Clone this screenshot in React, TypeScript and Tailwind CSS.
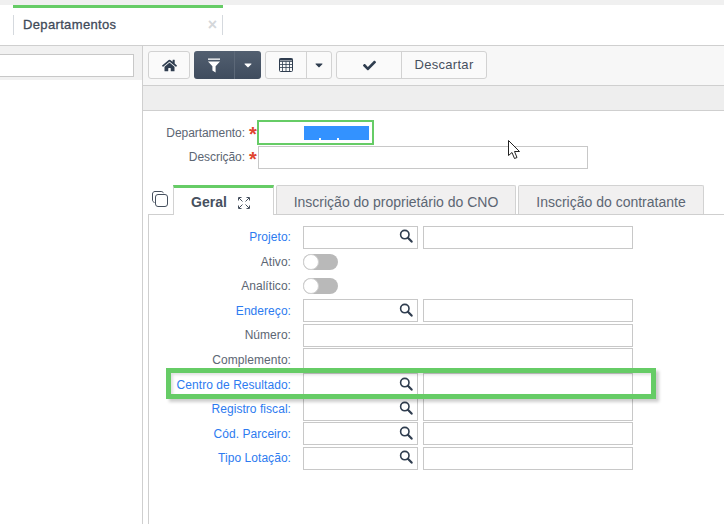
import { FaHome, FaCheck, FaCaretDown } from "react-icons/fa";

const F = "font-['Liberation_Sans',Arial,sans-serif]";

function Search() {
  return (
    <svg width="14" height="14" viewBox="0 0 14 14" className="shrink-0">
      <circle cx="5.8" cy="5.6" r="4.2" fill="none" stroke="#2f3d4f" strokeWidth="1.6" />
      <path d="M8.9 8.8 L12.6 12.6" stroke="#2f3d4f" strokeWidth="2.2" strokeLinecap="round" />
    </svg>
  );
}

function Row({ label, link, kind, h }: { label: string; link?: boolean; kind: "lookup" | "toggle" | "text"; h: string }) {
  return (
    <div className={`flex items-center ${h}`}>
      <div className={`w-[142px] text-right text-[12px] tracking-[0.05px] whitespace-nowrap ${link ? "text-[#2d7bf0]" : "text-[#5c6673]"}`}>{label}</div>
      <div className="ml-[12px] flex items-center">
        {kind === "lookup" && (
          <>
            <div className="w-[115px] h-[23px] border border-[#c8c8c8] flex items-center justify-end pr-[4px] pb-[2px] bg-white">
              <Search />
            </div>
            <div className="ml-[5px] w-[210px] h-[23px] border border-[#c8c8c8] bg-white" />
          </>
        )}
        {kind === "text" && <div className="w-[330px] h-[23px] border border-[#c8c8c8] bg-white" />}
        {kind === "toggle" && (
          <div className="w-[35px] h-[16px] rounded-full bg-[#b9b9b9] relative">
            <div className="absolute left-0 top-0 w-[16px] h-[16px] rounded-full bg-white border border-[#d0d0d0]" />
          </div>
        )}
      </div>
    </div>
  );
}

export default function App() {
  return (
    <div className={`${F} relative w-[724px] h-[524px] overflow-hidden bg-white text-[#3c4858]`}>
      <div className="h-[5px] bg-[#f0f0f0]" />
      <div className="h-[41px] border-b border-[#cfcfcf] flex items-start pl-[13px]">
        <div className="w-[210px] h-[30px] relative border-t-[3px] border-[#66cc66]">
          <div className="mt-[7px] h-[20px] border-x border-[#d5d9de] flex items-center justify-between pl-[9px] pr-[5px]">
            <span className="text-[13px] text-[#3f4a59] tracking-[0.35px] [-webkit-text-stroke:0.3px_#3f4a59]">Departamentos</span>
            <span className="text-[16px] leading-none font-bold text-[#d4d7da]">×</span>
          </div>
        </div>
      </div>
      <div className="flex h-[478px]">
        <div className="w-[143px] shrink-0 border-r border-[#cfcfcf]">
          <div className="h-[34px] bg-[#f1f1f1] pt-[8px] pr-[8px]">
            <div className="h-[23px] border border-[#c8c8c8] border-l-0 bg-white" />
          </div>
        </div>
        <div className="flex-1 min-w-0">
          <div className="h-[40px] bg-[#f7f7f7] border-b border-[#cfcfcf] flex items-start pt-[5px] pl-[5px] gap-[4px]">
            <div className="w-[42px] h-[28px] border border-[#d2d2d2] rounded-[3px] bg-[#fafafa] flex items-center justify-center text-[#2f3d4f]">
              <FaHome size={15} />
            </div>
            <div className="w-[67px] h-[28px] rounded-[3px] bg-gradient-to-b from-[#525f70] to-[#3f4c5e] flex text-white">
              <div className="w-[41px] border-r border-[#5c6878] flex items-center justify-center">
                <svg width="14" height="15" viewBox="0 0 14 15">
                  <path d="M1 0.5 H13 V1.8 H1 Z" fill="#fff" />
                  <path d="M1 3.5 H13 L8.6 8.2 V14.5 L5.4 12.4 V8.2 Z" fill="#fff" />
                </svg>
              </div>
              <div className="flex-1 flex items-center justify-center"><FaCaretDown size={12} /></div>
            </div>
            <div className="w-[67px] h-[28px] border border-[#d2d2d2] rounded-[3px] bg-[#fafafa] flex text-[#2f3d4f]">
              <div className="w-[41px] border-r border-[#d2d2d2] flex items-center justify-center">
                <svg width="14" height="14" viewBox="0 0 14 14" fill="none" stroke="#2f3d4f">
                  <rect x="0.5" y="0.5" width="13" height="13" rx="1" />
                  <path d="M0.5 3.5H13.5M0.5 6.5H13.5M0.5 9.5H13.5M3.5 3.5V13.5M7 3.5V13.5M10.5 3.5V13.5" strokeWidth="0.8" />
                  <path d="M0.5 1.5H13.5" strokeWidth="2" />
                </svg>
              </div>
              <div className="flex-1 flex items-center justify-center"><FaCaretDown size={12} /></div>
            </div>
            <div className="w-[151px] h-[28px] border border-[#d2d2d2] rounded-[3px] bg-[#fafafa] flex text-[#2f3d4f]">
              <div className="w-[65px] border-r border-[#d2d2d2] flex items-center justify-center"><FaCheck size={13} /></div>
              <div className="flex-1 flex items-center justify-center text-[13px] tracking-[0.3px] text-[#46505e]">Descartar</div>
            </div>
          </div>
          <div className="h-[25px] bg-[#eeeeee] border-b border-[#cfcfcf]" />
          <div className="h-[74px] pt-[9px]">
            <div className="flex items-center h-[25px]">
              <div className="w-[102px] text-right text-[12px] pt-[1px] tracking-[-0.05px] text-[#5c6673]">Departamento:</div>
              <span className="ml-[4px] w-[8px] text-[#e0452f] text-[20px] font-bold leading-none pt-[3px]">*</span>
              <div className="w-[117px] h-[25px] border-[2px] border-[#66cc66] flex items-center justify-end pr-[3px]">
                <div className="w-[65px] h-[14px] bg-[#3392ff] flex items-end pl-[15px] gap-[16px]">
                  <span className="w-[2px] h-[2px] bg-white" />
                  <span className="w-[2px] h-[2px] bg-white" />
                </div>
              </div>
            </div>
            <div className="flex items-center h-[24px]">
              <div className="w-[102px] text-right text-[12px] tracking-[-0.05px] text-[#5c6673]">Descrição:</div>
              <span className="ml-[4px] w-[9px] text-[#e0452f] text-[20px] font-bold leading-none pt-[3px]">*</span>
              <div className="w-[330px] h-[23px] border border-[#c8c8c8]" />
            </div>
          </div>
          <div className="pl-[5px]">
            <div className="h-[29px] flex items-end relative">
              <div className="w-[25px] h-[29px] flex items-start pl-[4px] pt-[6px]">
                <svg width="16" height="16" viewBox="0 0 16 16" fill="none" stroke="#46505e" strokeWidth="1">
                  <path d="M2.5 11.5 C1.2 11 0.5 10.2 0.5 9 V3 C0.5 1.5 1.5 0.5 3 0.5 H9 C10.2 0.5 11 1 11.5 2.2" />
                  <rect x="3.5" y="3.5" width="12" height="12" rx="2.5" />
                </svg>
              </div>
              <div className="w-[101px] h-[30px] mb-[-1px] border-t-[3px] border-x border-x-[#d2d2d2] border-t-[#66cc66] bg-white relative z-10 flex items-center justify-center gap-[11px] pt-[2px] pr-[6px]">
                <span className="text-[14px] font-bold text-[#46505e]">Geral</span>
                <svg width="12" height="12" viewBox="0 0 12 12" fill="none" stroke="#46505e" strokeWidth="1">
                  <path d="M0.5 3.5V0.5H3.5M8.5 0.5H11.5V3.5M11.5 8.5V11.5H8.5M3.5 11.5H0.5V8.5M1 1L4.5 4.5M11 1L7.5 4.5M11 11L7.5 7.5M1 11L4.5 7.5" />
                </svg>
              </div>
              <div className="ml-[2px] w-[240px] h-[29px] bg-[#f1f0f0] border border-b-0 border-[#d2d2d2] rounded-t-[2px] flex items-center justify-center pt-[4px] text-[14px] text-[#5c6673] whitespace-nowrap">Inscrição do proprietário do CNO</div>
              <div className="ml-[2px] w-[186px] h-[29px] bg-[#f1f0f0] border border-b-0 border-[#d2d2d2] rounded-t-[2px] flex items-center justify-center pt-[4px] text-[14px] text-[#5c6673] whitespace-nowrap">Inscrição do contratante</div>
            </div>
            <div className="border-t border-l border-[#cfcfcf] h-[310px] pt-[10px]">
              <Row label="Projeto:" link kind="lookup" h="h-[24px]" />
              <Row label="Ativo:" kind="toggle" h="h-[25px]" />
              <Row label="Analítico:" kind="toggle" h="h-[24px]" />
              <Row label="Endereço:" link kind="lookup" h="h-[25px]" />
              <Row label="Número:" kind="text" h="h-[24px]" />
              <Row label="Complemento:" kind="text" h="h-[25px]" />
              <Row label="Centro de Resultado:" link kind="lookup" h="h-[25px]" />
              <Row label="Registro fiscal:" link kind="lookup" h="h-[24px]" />
              <Row label="Cód. Parceiro:" link kind="lookup" h="h-[25px]" />
              <Row label="Tipo Lotação:" link kind="lookup" h="h-[24px]" />
            </div>
          </div>
        </div>
      </div>
      {/* annotation overlay */}
      <div className="absolute left-[166px] top-[368px] w-[490px] h-[31px] border-[5px] border-[#66cc66] shadow-[3px_3px_3px_rgba(0,0,0,0.2),inset_2px_2px_3px_rgba(0,0,0,0.12)]" />
      {/* mouse pointer */}
      <svg className="absolute left-[508px] top-[140px]" width="14" height="20" viewBox="0 0 14 20">
        <path d="M0.5 0.5 V15.5 L4 12.5 L6.5 18.5 L9 17.5 L6.5 11.5 L11.5 11.5 Z" fill="#fff" stroke="#222" strokeWidth="1" />
      </svg>
    </div>
  );
}
